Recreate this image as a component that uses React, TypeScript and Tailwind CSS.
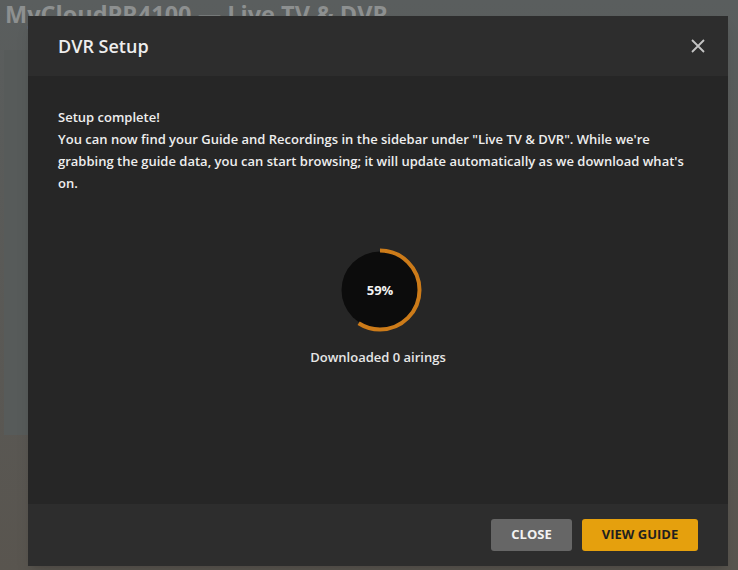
import React from "react";

function Ring({ pct }: { pct: number }) {
  const r = 39.5;
  const c = 2 * Math.PI * r;
  return (
    <svg width="84" height="84" viewBox="0 0 84 84">
      <circle cx="42" cy="42" r="38.5" fill="#0c0c0c" />
      <circle
        cx="42"
        cy="42"
        r={r}
        fill="none"
        stroke="#cc7b19"
        strokeWidth="4"
        strokeDasharray={`${(c * pct) / 100} ${c}`}
        transform="rotate(-90 42 42)"
      />
      <text
        x="42"
        y="46.5"
        textAnchor="middle"
        fill="#f2f2f2"
        style={{ font: "700 13px 'Open Sans', sans-serif" }}
      >
        {pct}%
      </text>
    </svg>
  );
}

export default function App() {
  return (
    <div
      className="relative h-[570px] w-[738px] overflow-hidden bg-gradient-to-b from-[#5a5e5e] to-[#59554f]"
      style={{ fontFamily: "'Open Sans', sans-serif" }}
    >
      <div className="-mt-[2px] pl-[5px] text-[23.5px] font-bold leading-[32px] text-[#8d9090]">
        MyCloudPR4100 — Live TV &amp; DVR
      </div>
      <div className="absolute left-[4px] top-[50px] h-[385px] w-[24px] bg-[#575b5a]" />

      <div className="absolute left-[28px] top-[16px] flex h-[550px] w-[700px] flex-col bg-[#262626] shadow-lg">
        <div className="flex h-[60px] items-center justify-between bg-[#2d2d2d] pl-[30px] pr-[23px]">
          <div className="text-[18px] font-semibold text-[#eeeeee]">DVR Setup</div>
          <svg width="14" height="14" viewBox="0 0 14 14" className="text-[#c4c4c4]">
            <path d="M1 1 L13 13 M13 1 L1 13" stroke="currentColor" strokeWidth="1.8" />
          </svg>
        </div>
        <div className="flex flex-1 flex-col px-[30px] pt-[30px]">
          <div className="text-[13px] font-semibold leading-[22px] text-[#eeeeee]">
            <div>Setup complete!</div>
            <div>
              You can now find your Guide and Recordings in the sidebar under "Live TV &amp; DVR". While we're grabbing the guide data, you can start browsing; it will update automatically as we download what's on.
            </div>
          </div>
          <div className="mt-[54px] flex flex-col items-center">
            <div className="ml-[4px]">
              <Ring pct={59} />
            </div>
            <div className="mt-[14px] text-[13px] font-semibold leading-[22px] text-[#e6e6e6]">
              Downloaded 0 airings
            </div>
          </div>
        </div>
        <div className="flex h-[62px] items-center justify-end gap-[10px] bg-[#2d2d2d] pr-[30px]">
          <button className="h-[32px] w-[81px] rounded-[3px] bg-[#666666] text-[13px] font-bold uppercase text-[#f2f2f2]">
            Close
          </button>
          <button className="h-[32px] w-[116px] rounded-[3px] bg-[#e5a00d] text-[13px] font-bold uppercase text-[#1f1f1f]">
            View Guide
          </button>
        </div>
      </div>
    </div>
  );
}
